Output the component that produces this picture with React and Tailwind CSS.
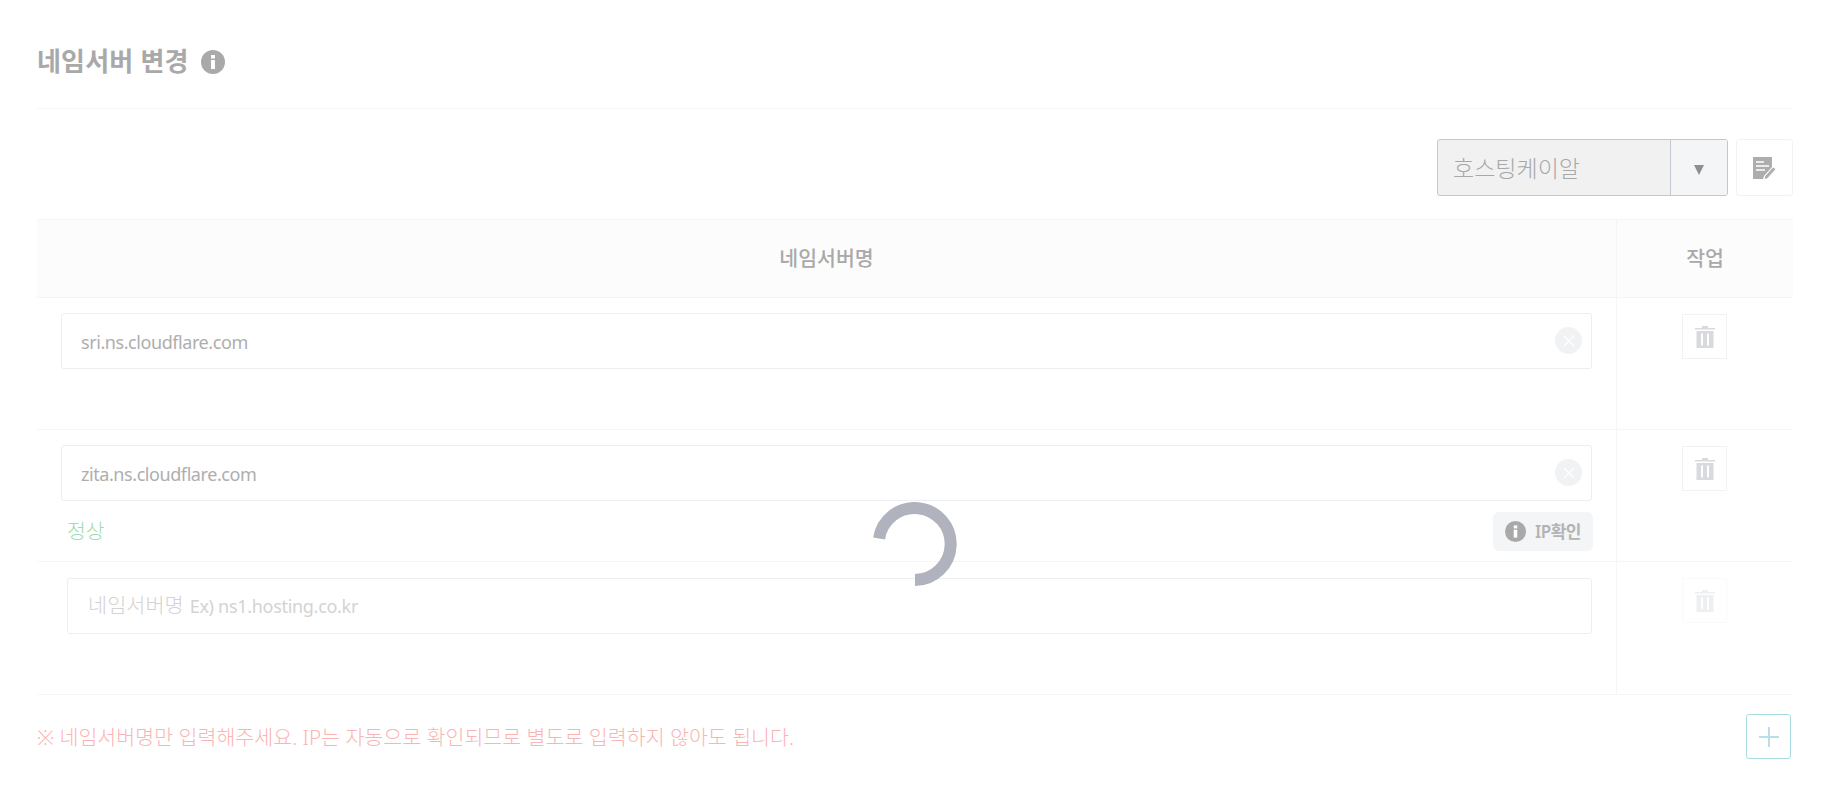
const FONT = "font-['Noto_Sans','Noto_Sans_CJK_KR',sans-serif]";

function InfoIcon({ className }) {
  return (
    <svg viewBox="0 0 24 24" className={className}>
      <circle cx="12" cy="12" r="12" fill="#a9a9a9" />
      <rect x="10" y="5" width="4" height="3.500" fill="#fff" />
      <rect x="10" y="10" width="4" height="9" fill="#fff" />
    </svg>
  );
}

function TrashIcon({ color }) {
  return (
    <svg viewBox="0 0 20 22" className="w-5 h-[22px]">
      <path d="M7 0h6v2h7v1.500H0V2h7z" fill={color} />
      <path
        d="M1.500 5h17v17h-17zM6 7.500v12h2v-12zM12 7.500v12h2v-12z"
        fill={color}
        fillRule="evenodd"
      />
    </svg>
  );
}

function NameInput({ value, className = '' }) {
  return (
    <div className={`relative h-[56px] rounded-[3px] border border-[#eceef1] bg-white flex items-center pl-[19px] pt-[2px] text-[18px] tracking-[-0.43px] text-[#aeaeae] ${className}`}>
      {value}
      <div className="absolute right-[9px] top-[13px] w-[27px] h-[27px] rounded-full bg-[#f1f2f4] flex items-center justify-center">
        <svg viewBox="0 0 12 12" className="w-3 h-3">
          <path d="M1 1l10 10M11 1L1 11" stroke="#fff" strokeWidth="1.300" />
        </svg>
      </div>
    </div>
  );
}

function TrashButton({ faded }) {
  return (
    <div className={`w-[45px] h-[45px] border flex items-center justify-center ${faded ? 'border-[#fafafb]' : 'border-[#f1f2f4]'}`}>
      <TrashIcon color={faded ? '#eeeff0' : '#d8dadd'} />
    </div>
  );
}

function Row({ children, faded, height = 'h-[132px]' }) {
  return (
    <div className={`grid grid-cols-[1fr_176px] border-b border-[#f5f5f6] ${height}`}>
      <div className="border-r border-[#f5f5f6] pt-[15px] pr-[24px]">{children}</div>
      <div className="pt-[16px] pl-[65px]">
        <TrashButton faded={faded} />
      </div>
    </div>
  );
}

export default function App() {
  return (
    <div className={`relative w-[1824px] h-[805px] overflow-hidden bg-white pl-[37px] pr-[31px] ${FONT}`}>
      <div className="h-[109px] border-b border-[#f5f5f6] flex items-center gap-[12px] pt-[14px]">
        <h2 className="text-[26px] font-bold tracking-[0.2px] text-[#a9a9a9]">네임서버 변경</h2>
        <InfoIcon className="w-6 h-6 mt-[2px]" />
      </div>

      <div className="flex justify-end gap-[8px] pt-[30px] pb-[23px]">
        <div className="w-[291px] h-[57px] rounded-[3px] border border-[#c3c8d0] bg-[#f1f1f2] flex overflow-hidden">
          <div className="flex-1 flex items-center pl-[15px] pt-[2px] text-[23px] font-light text-[#a8a8a8]">호스팅케이알</div>
          <div className="w-[57px] border-l border-[#c3c8d0] bg-[#f4f5f7] flex items-center justify-center pt-[4px]">
            <svg viewBox="0 0 10 10" className="w-[10px] h-[10px]">
              <path d="M0 0h10L5 10z" fill="#8c8e91" />
            </svg>
          </div>
        </div>
        <div className="w-[57px] h-[57px] rounded-[3px] border border-[#f1f2f4] flex items-center justify-center">
          <svg viewBox="0 0 23 22" className="w-[23px] h-[22px]">
            <path d="M0 0h19v10l-8 9-1 3H0z" fill="#adadad" />
            <path d="M3 5h8M3 9h13M3 13h9" stroke="#fff" strokeWidth="1.500" />
            <path d="M12 19l8-9 3 2-9 10h-3z" fill="#adadad" stroke="#fff" strokeWidth="0.800" />
          </svg>
        </div>
      </div>

      <div className="grid grid-cols-[1fr_176px] h-[79px] border-y border-[#f5f5f6] bg-[#fcfcfc] text-[20.500px] font-medium text-[#a9a9a9]">
        <div className="border-r border-[#f5f5f6] flex items-center justify-center">네임서버명</div>
        <div className="flex items-center justify-center">작업</div>
      </div>

      <Row>
        <NameInput value="sri.ns.cloudflare.com" className="ml-[24px]" />
      </Row>

      <Row>
        <NameInput value="zita.ns.cloudflare.com" className="ml-[24px]" />
        <div className="flex items-center justify-between ml-[30px] mr-[-1px] mt-[11px]">
          <span className="text-[20.500px] font-light text-[#a0dcb0]">정상</span>
          <div className="w-[100px] h-[39px] rounded-[6px] bg-[#f4f5f7] flex items-center justify-center gap-[9px] text-[17px] font-semibold tracking-[-0.5px] text-[#b3b3b3]">
            <InfoIcon className="w-[21px] h-[21px]" />
            IP확인
          </div>
        </div>
      </Row>

      <Row faded height="h-[133px]">
        <div className="ml-[30px] mt-px h-[56px] rounded-[3px] border border-[#eceef1] bg-white flex items-center pl-[20px] text-[18px] tracking-[-0.3px] text-[#d3d3d3]">
          <span className="text-[20.800px] font-light tracking-normal mr-[6px]">네임서버명</span> Ex) ns1.hosting.co.kr
        </div>
      </Row>

      <div className="flex items-center justify-between pt-[19px] pr-[2px]">
        <p className="pt-[2px] text-[20.600px] font-light text-[#fbb4b4]">※ 네임서버명만 입력해주세요. IP는 자동으로 확인되므로 별도로 입력하지 않아도 됩니다.</p>
        <div className="w-[45px] h-[45px] rounded-[3px] border border-[#a9dce1] flex items-center justify-center">
          <svg viewBox="0 0 20 20" className="w-5 h-5">
            <path d="M10 0v20M0 10h20" stroke="#b5e0e5" strokeWidth="2" />
          </svg>
        </div>
      </div>

      {/* loading spinner over the table */}
      <svg viewBox="0 0 84 84" className="absolute left-[873px] top-[502px] w-[84px] h-[84px]">
        <path d="M6.100 36.500A36 36 0 1 1 42 78" fill="none" stroke="#b0b3bd" strokeWidth="12" />
      </svg>
    </div>
  );
}
